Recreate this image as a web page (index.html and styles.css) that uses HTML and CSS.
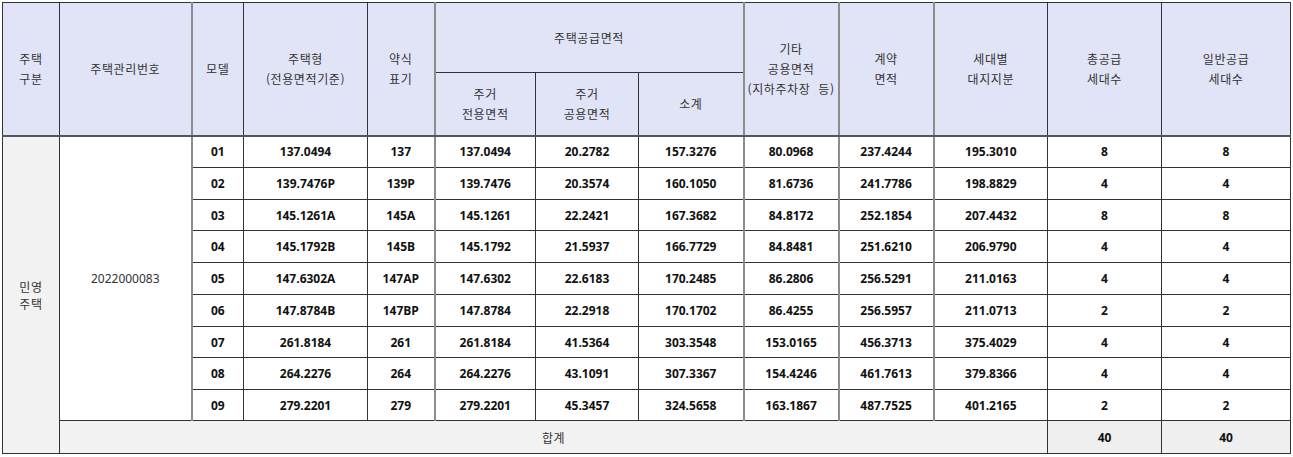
FILE: index.html
```html
<!DOCTYPE html>
<html lang="ko">
<head>
<meta charset="utf-8">
<link rel="stylesheet" href="styles.css">
</head>
<body>
<table class="supply">
  <colgroup>
    <col class="c57"><col class="c132"><col class="c52"><col class="c124"><col class="c67">
    <col class="c101"><col class="c103"><col class="c105"><col class="c95"><col class="c95">
    <col class="c114"><col class="c114"><col class="c129">
  </colgroup>
  <thead>
    <tr class="h1">
      <th rowspan="2">주택<br>구분</th>
      <th rowspan="2">주택관리번호</th>
      <th rowspan="2" class="gl">모델</th>
      <th rowspan="2">주택형<br>(전용면적기준)</th>
      <th rowspan="2">약식<br>표기</th>
      <th colspan="3" class="gl">주택공급면적</th>
      <th rowspan="2" class="gl">기타<br>공용면적<br>(지하주차장&nbsp; 등)</th>
      <th rowspan="2" class="gl">계약<br>면적</th>
      <th rowspan="2" class="gl">세대별<br>대지지분</th>
      <th rowspan="2">총공급<br>세대수</th>
      <th rowspan="2">일반공급<br>세대수</th>
    </tr>
    <tr class="h2">
      <th class="gl">주거<br>전용면적</th>
      <th>주거<br>공용면적</th>
      <th>소계</th>
    </tr>
  </thead>
  <tbody>
    <tr class="ra">
      <td rowspan="10" class="kind">민영<br>주택</td>
      <td rowspan="9" class="mgmt">2022000083</td>
      <td class="gl">01</td><td>137.0494</td><td>137</td><td class="gl">137.0494</td><td>20.2782</td><td>157.3276</td><td class="gl">80.0968</td><td class="gl">237.4244</td><td class="gl">195.3010</td><td>8</td><td>8</td>
    </tr>
    <tr class="ra">
      <td class="gl">02</td><td>139.7476P</td><td>139P</td><td class="gl">139.7476</td><td>20.3574</td><td>160.1050</td><td class="gl">81.6736</td><td class="gl">241.7786</td><td class="gl">198.8829</td><td>4</td><td>4</td>
    </tr>
    <tr class="rb">
      <td class="gl">03</td><td>145.1261A</td><td>145A</td><td class="gl">145.1261</td><td>22.2421</td><td>167.3682</td><td class="gl">84.8172</td><td class="gl">252.1854</td><td class="gl">207.4432</td><td>8</td><td>8</td>
    </tr>
    <tr class="ra">
      <td class="gl">04</td><td>145.1792B</td><td>145B</td><td class="gl">145.1792</td><td>21.5937</td><td>166.7729</td><td class="gl">84.8481</td><td class="gl">251.6210</td><td class="gl">206.9790</td><td>4</td><td>4</td>
    </tr>
    <tr class="ra">
      <td class="gl">05</td><td>147.6302A</td><td>147AP</td><td class="gl">147.6302</td><td>22.6183</td><td>170.2485</td><td class="gl">86.2806</td><td class="gl">256.5291</td><td class="gl">211.0163</td><td>4</td><td>4</td>
    </tr>
    <tr class="ra">
      <td class="gl">06</td><td>147.8784B</td><td>147BP</td><td class="gl">147.8784</td><td>22.2918</td><td>170.1702</td><td class="gl">86.4255</td><td class="gl">256.5957</td><td class="gl">211.0713</td><td>2</td><td>2</td>
    </tr>
    <tr class="rb">
      <td class="gl">07</td><td>261.8184</td><td>261</td><td class="gl">261.8184</td><td>41.5364</td><td>303.3548</td><td class="gl">153.0165</td><td class="gl">456.3713</td><td class="gl">375.4029</td><td>4</td><td>4</td>
    </tr>
    <tr class="ra">
      <td class="gl">08</td><td>264.2276</td><td>264</td><td class="gl">264.2276</td><td>43.1091</td><td>307.3367</td><td class="gl">154.4246</td><td class="gl">461.7613</td><td class="gl">379.8366</td><td>4</td><td>4</td>
    </tr>
    <tr class="rb">
      <td class="gl">09</td><td>279.2201</td><td>279</td><td class="gl">279.2201</td><td>45.3457</td><td>324.5658</td><td class="gl">163.1867</td><td class="gl">487.7525</td><td class="gl">401.2165</td><td>2</td><td>2</td>
    </tr>
    <tr class="total">
      <td colspan="10" class="label">합계</td>
      <td class="sum">40</td>
      <td class="sum">40</td>
    </tr>
  </tbody>
</table>
</body>
</html>
```
FILE: styles.css
```css
html, body {
  background: #ffffff;
}
body {
  margin: 2px 0 0 2px;
  font-family: "Noto Sans CJK KR", "Noto Sans", sans-serif;
  font-size: 12px;
  color: #333333;
}
.supply {
  border-collapse: collapse;
  table-layout: fixed;
  width: 1289px;
  border: 1px solid #444444;
}
.c57 { width: 57px; }
.c132 { width: 132px; }
.c52 { width: 52px; }
.c124 { width: 124px; }
.c67 { width: 67px; }
.c101 { width: 101px; }
.c103 { width: 103px; }
.c105 { width: 105px; }
.c95 { width: 95px; }
.c114 { width: 114px; }
.c129 { width: 129px; }

.supply th,
.supply td {
  border: 1px solid #333333;
  padding: 0;
  text-align: center;
  vertical-align: middle;
}
.supply th {
  background: #e1e3f7;
  font-weight: 400;
  line-height: 20px;
  letter-spacing: 0.6px;
  color: #333333;
}
.supply th.gl,
.supply td.gl {
  border-left: 2px solid #8c8c8c;
}
.h1 { height: 70px; }
.h2 { height: 63px; }
.h2 th,
.h1 th[rowspan] {
  border-bottom: 2px solid #555555;
}
.ra { height: 32px; }
.rb { height: 31px; }
.supply td {
  font-family: "Open Sans", "Noto Sans", sans-serif;
  font-weight: 700;
  color: #111111;
  font-size: 12px;
}
.supply td.kind {
  background: #f2f2f2;
  font-family: "Noto Sans CJK KR", sans-serif;
  font-weight: 400;
  color: #333333;
  line-height: 17px;
  letter-spacing: 0.6px;
}
.supply td.mgmt {
  font-family: "Noto Sans", sans-serif;
  font-weight: 400;
  color: #333333;
}
.total { height: 33px; }
.total td {
  background: #f2f2f2;
}
.total td.label {
  font-family: "Noto Sans CJK KR", sans-serif;
  font-weight: 400;
  color: #333333;
  letter-spacing: 0.6px;
}
.total td.sum {
  background: #efefef;
}
```
